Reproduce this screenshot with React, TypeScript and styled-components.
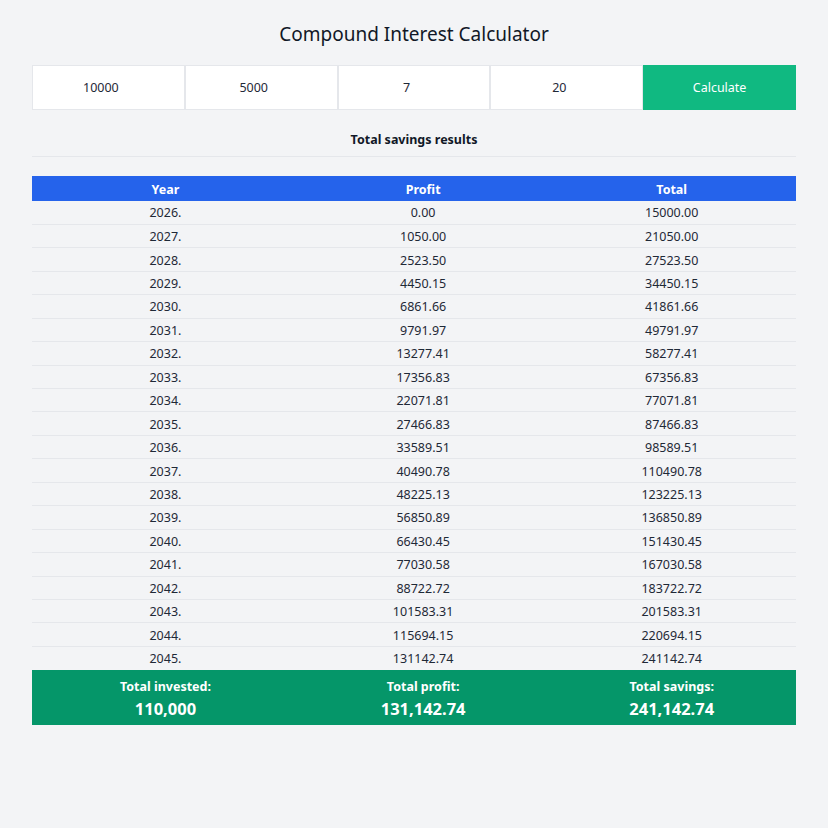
import React from "react";
import styled, { createGlobalStyle } from "styled-components";

const Global = createGlobalStyle`
  html, body { margin: 0; padding: 0; background: #f3f4f6; }
  body { font-family: "Noto Sans", "Open Sans", sans-serif; color: #111827; }
  * { box-sizing: border-box; }
`;

const Page = styled.div`
  padding: 20px 32px;
`;

const Title = styled.h1`
  margin: 0 0 17px;
  text-align: center;
  font-size: 19px;
  font-weight: 400;
  line-height: 28px;
  color: #111827;
`;

const InputRow = styled.div`
  display: grid;
  grid-template-columns: repeat(5, 1fr);
  height: 45px;
`;

const Field = styled.input`
  width: 100%;
  height: 100%;
  border: 1px solid #e5e7eb;
  background: #fff;
  text-align: center;
  font-family: inherit;
  font-size: 12.5px;
  color: #1f2937;
  outline: none;
`;

const CalcButton = styled.button`
  border: none;
  background: #10b981;
  color: #fff;
  font-family: inherit;
  font-size: 12.5px;
  padding-top: 1px;
`;

const Subtitle = styled.div`
  margin-top: 21px;
  padding-bottom: 7px;
  text-align: center;
  font-size: 12.5px;
  font-weight: 700;
  line-height: 18px;
  border-bottom: 1px solid #e5e7eb;
`;

const Table = styled.table`
  width: 100%;
  margin-top: 19px;
  border-collapse: collapse;
  font-size: 12.5px;
`;

const HeadCell = styled.th`
  background: #2563eb;
  color: #fff;
  font-weight: 700;
  height: 25px;
  padding: 1px 0 0;
`;

const Row = styled.tr`
  border-bottom: 1px solid #e5e7eb;
  &:last-child { border-bottom: none; }
`;

const Cell = styled.td`
  text-align: center;
  height: 23.45px;
  padding: 1px 0 0;
  color: #1f2937;
`;

const FootCell = styled.td`
  background: #059669;
  color: #fff;
  text-align: center;
  padding: 8px 0 5px;
  font-weight: 700;
`;

const FootLabel = styled.div`
  font-size: 12.5px;
  line-height: 18px;
`;

const FootValue = styled.div`
  font-size: 16.5px;
  line-height: 23px;
  margin-top: 1px;
`;

const data: [string, string, string][] = [
  ["2026.", "0.00", "15000.00"],
  ["2027.", "1050.00", "21050.00"],
  ["2028.", "2523.50", "27523.50"],
  ["2029.", "4450.15", "34450.15"],
  ["2030.", "6861.66", "41861.66"],
  ["2031.", "9791.97", "49791.97"],
  ["2032.", "13277.41", "58277.41"],
  ["2033.", "17356.83", "67356.83"],
  ["2034.", "22071.81", "77071.81"],
  ["2035.", "27466.83", "87466.83"],
  ["2036.", "33589.51", "98589.51"],
  ["2037.", "40490.78", "110490.78"],
  ["2038.", "48225.13", "123225.13"],
  ["2039.", "56850.89", "136850.89"],
  ["2040.", "66430.45", "151430.45"],
  ["2041.", "77030.58", "167030.58"],
  ["2042.", "88722.72", "183722.72"],
  ["2043.", "101583.31", "201583.31"],
  ["2044.", "115694.15", "220694.15"],
  ["2045.", "131142.74", "241142.74"],
];

export default function App() {
  return (
    <Page>
      <Global />
      <Title>Compound Interest Calculator</Title>
      <InputRow>
        <Field type="number" defaultValue="10000" />
        <Field type="number" defaultValue="5000" />
        <Field type="number" defaultValue="7" />
        <Field type="number" defaultValue="20" />
        <CalcButton>Calculate</CalcButton>
      </InputRow>
      <Subtitle>Total savings results</Subtitle>
      <Table>
        <thead>
          <tr>
            <HeadCell>Year</HeadCell>
            <HeadCell>Profit</HeadCell>
            <HeadCell>Total</HeadCell>
          </tr>
        </thead>
        <tbody>
          {data.map((r) => (
            <Row key={r[0]}>
              <Cell>{r[0]}</Cell>
              <Cell>{r[1]}</Cell>
              <Cell>{r[2]}</Cell>
            </Row>
          ))}
        </tbody>
        <tfoot>
          <tr>
            <FootCell>
              <FootLabel>Total invested:</FootLabel>
              <FootValue>110,000</FootValue>
            </FootCell>
            <FootCell>
              <FootLabel>Total profit:</FootLabel>
              <FootValue>131,142.74</FootValue>
            </FootCell>
            <FootCell>
              <FootLabel>Total savings:</FootLabel>
              <FootValue>241,142.74</FootValue>
            </FootCell>
          </tr>
        </tfoot>
      </Table>
    </Page>
  );
}
